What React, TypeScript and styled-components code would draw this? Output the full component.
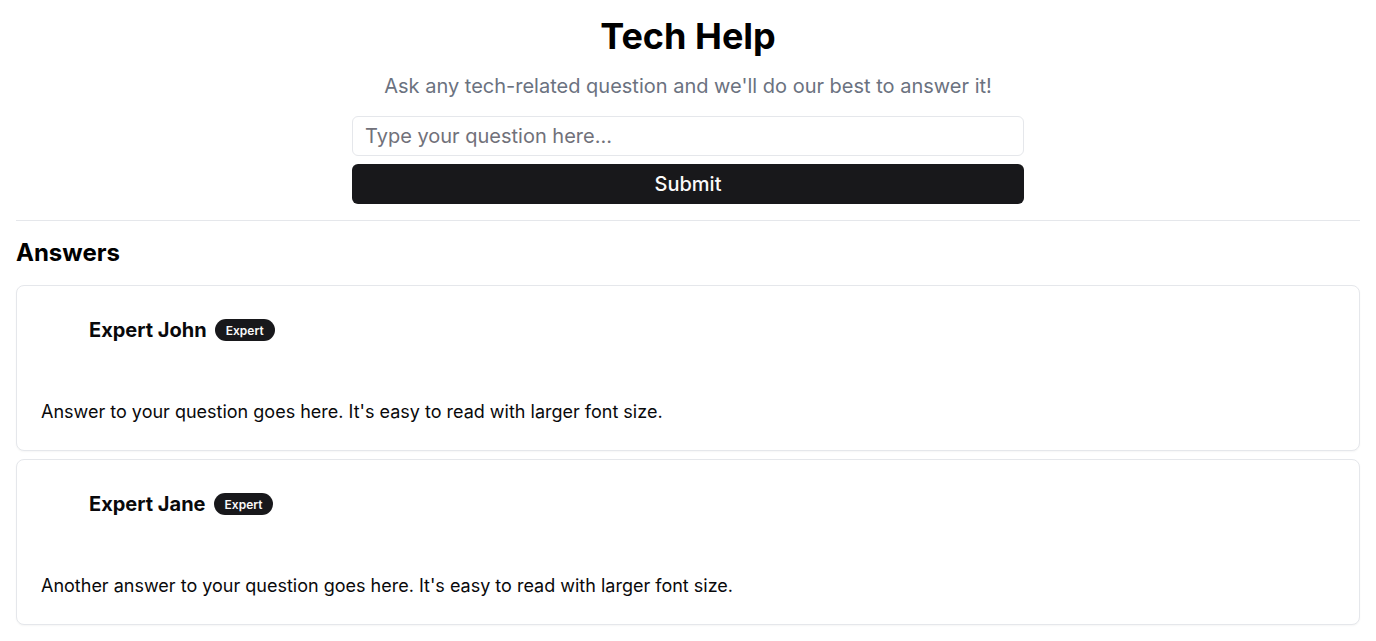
import React from "react";
import styled, { createGlobalStyle } from "styled-components";

const Global = createGlobalStyle`
  html, body { margin: 0; padding: 0; background: #ffffff; }
  body { font-family: Inter, "Noto Sans", sans-serif; color: #09090b; }
  * { box-sizing: border-box; }
`;

const Page = styled.main`
  padding: 16px;
  display: flex;
  flex-direction: column;
`;

const Hero = styled.section`
  display: flex;
  flex-direction: column;
  align-items: center;
`;

const Title = styled.h1`
  margin: 0;
  font-size: 36px;
  line-height: 40px;
  font-weight: 700;
  color: #000;
`;

const Subtitle = styled.p`
  margin: 16px 0 0;
  font-size: 20px;
  line-height: 28px;
  color: #6b7280;
`;

const Form = styled.form`
  margin-top: 16px;
  width: 672px;
  display: flex;
  flex-direction: column;
  gap: 8px;
`;

const Input = styled.input`
  height: 40px;
  width: 100%;
  border: 1px solid #e5e7eb;
  border-radius: 6px;
  padding: 0 12px;
  font-family: inherit;
  font-size: 20px;
  color: #09090b;
  background: #fff;
  outline: none;
  &::placeholder { color: #71717a; }
`;

const Button = styled.button`
  height: 40px;
  width: 100%;
  border: none;
  border-radius: 6px;
  background: #18181b;
  color: #fafafa;
  font-family: inherit;
  font-size: 20px;
  font-weight: 500;
  cursor: pointer;
`;

const Divider = styled.hr`
  margin: 16px 0 0;
  border: none;
  border-top: 1px solid #e5e7eb;
`;

const SectionTitle = styled.h2`
  margin: 16px 0 0;
  font-size: 24px;
  line-height: 32px;
  font-weight: 700;
  color: #000;
`;

const List = styled.div`
  margin-top: 16px;
  display: flex;
  flex-direction: column;
  gap: 8px;
`;

const Card = styled.article`
  border: 1px solid #e5e7eb;
  border-radius: 8px;
  background: #fff;
  box-shadow: 0 1px 2px rgba(0, 0, 0, 0.04);
`;

const CardHeader = styled.header`
  padding: 24px 24px 0;
  display: flex;
  gap: 8px;
  height: 112px;
  align-items: flex-start;
`;

const Avatar = styled.div`
  width: 40px;
  height: 40px;
  flex: none;
`;

const NameRow = styled.div`
  height: 40px;
  display: flex;
  align-items: center;
  gap: 8px;
`;

const Name = styled.span`
  font-size: 20px;
  font-weight: 700;
  color: #09090b;
`;

const Badge = styled.span`
  display: inline-flex;
  align-items: center;
  height: 22px;
  padding: 0 11px;
  border-radius: 9999px;
  background: #18181b;
  color: #fafafa;
  font-size: 12px;
  font-weight: 600;
`;

const CardBody = styled.div`
  padding: 0 24px 24px;
  font-size: 18px;
  line-height: 28px;
  color: #09090b;
`;

const answers = [
  { name: "Expert John", text: "Answer to your question goes here. It's easy to read with larger font size." },
  { name: "Expert Jane", text: "Another answer to your question goes here. It's easy to read with larger font size." },
];

export default function App() {
  return (
    <>
      <Global />
      <Page>
        <Hero>
          <Title>Tech Help</Title>
          <Subtitle>Ask any tech-related question and we'll do our best to answer it!</Subtitle>
          <Form onSubmit={(e) => e.preventDefault()}>
            <Input placeholder="Type your question here..." />
            <Button type="submit">Submit</Button>
          </Form>
        </Hero>
        <Divider />
        <SectionTitle>Answers</SectionTitle>
        <List>
          {answers.map((a) => (
            <Card key={a.name}>
              <CardHeader>
                <Avatar />
                <NameRow>
                  <Name>{a.name}</Name>
                  <Badge>Expert</Badge>
                </NameRow>
              </CardHeader>
              <CardBody>{a.text}</CardBody>
            </Card>
          ))}
        </List>
      </Page>
    </>
  );
}
